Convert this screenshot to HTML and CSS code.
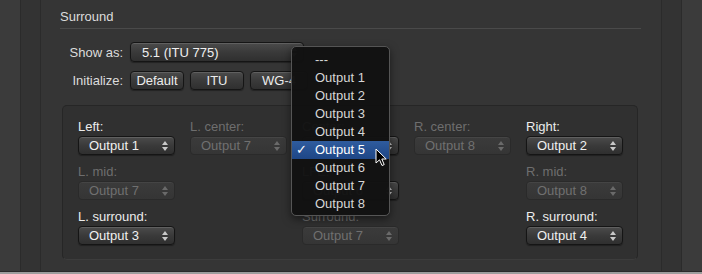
FILE: index.html
```html
<!DOCTYPE html>
<html>
<head>
  <title>Surround Preferences</title>
  <link rel="stylesheet" href="styles.css">
</head>
<body>
  <div class="window">
    <div class="frame">
      <div class="band band-outer"></div>
      <div class="band band-inner"></div>

      <div class="pane">
        <div class="section-title">Surround</div>

        <div class="form-row">
          <span class="form-label">Show as:</span>
          <div class="popup popup-wide">
            <span class="popup-value">5.1 (ITU 775)</span>
            <svg class="arrows" width="6" height="10" viewBox="0 0 6 10"><path d="M0 4 L3 0 L6 4 Z M0 6 L3 10 L6 6 Z"/></svg>
          </div>
        </div>

        <div class="form-row row-buttons">
          <span class="form-label">Initialize:</span>
          <button class="push">Default</button>
          <button class="push">ITU</button>
          <button class="push push-wide">WG-4</button>
        </div>

        <!-- speaker assignment -->
        <div class="group">
          <div class="speaker-grid">
            <div class="cell">
              <div class="cell-label">Left:</div>
              <div class="popup"><span class="popup-value">Output 1</span><svg class="arrows" width="6" height="10" viewBox="0 0 6 10"><path d="M0 4 L3 0 L6 4 Z M0 6 L3 10 L6 6 Z"/></svg></div>
            </div>
            <div class="cell off">
              <div class="cell-label">L. center:</div>
              <div class="popup"><span class="popup-value">Output 7</span><svg class="arrows" width="6" height="10" viewBox="0 0 6 10"><path d="M0 4 L3 0 L6 4 Z M0 6 L3 10 L6 6 Z"/></svg></div>
            </div>
            <div class="cell">
              <div class="cell-label">Center:</div>
              <div class="popup"><span class="popup-value">Output 5</span><svg class="arrows" width="6" height="10" viewBox="0 0 6 10"><path d="M0 4 L3 0 L6 4 Z M0 6 L3 10 L6 6 Z"/></svg></div>
            </div>
            <div class="cell off">
              <div class="cell-label">R. center:</div>
              <div class="popup"><span class="popup-value">Output 8</span><svg class="arrows" width="6" height="10" viewBox="0 0 6 10"><path d="M0 4 L3 0 L6 4 Z M0 6 L3 10 L6 6 Z"/></svg></div>
            </div>
            <div class="cell">
              <div class="cell-label">Right:</div>
              <div class="popup"><span class="popup-value">Output 2</span><svg class="arrows" width="6" height="10" viewBox="0 0 6 10"><path d="M0 4 L3 0 L6 4 Z M0 6 L3 10 L6 6 Z"/></svg></div>
            </div>

            <div class="cell off col-1">
              <div class="cell-label">L. mid:</div>
              <div class="popup"><span class="popup-value">Output 7</span><svg class="arrows" width="6" height="10" viewBox="0 0 6 10"><path d="M0 4 L3 0 L6 4 Z M0 6 L3 10 L6 6 Z"/></svg></div>
            </div>
            <div class="cell col-3">
              <div class="cell-label">LFE:</div>
              <div class="popup"><span class="popup-value">Output 6</span><svg class="arrows" width="6" height="10" viewBox="0 0 6 10"><path d="M0 4 L3 0 L6 4 Z M0 6 L3 10 L6 6 Z"/></svg></div>
            </div>
            <div class="cell off col-5">
              <div class="cell-label">R. mid:</div>
              <div class="popup"><span class="popup-value">Output 8</span><svg class="arrows" width="6" height="10" viewBox="0 0 6 10"><path d="M0 4 L3 0 L6 4 Z M0 6 L3 10 L6 6 Z"/></svg></div>
            </div>

            <div class="cell col-1">
              <div class="cell-label">L. surround:</div>
              <div class="popup"><span class="popup-value">Output 3</span><svg class="arrows" width="6" height="10" viewBox="0 0 6 10"><path d="M0 4 L3 0 L6 4 Z M0 6 L3 10 L6 6 Z"/></svg></div>
            </div>
            <div class="cell off col-3">
              <div class="cell-label">Surround:</div>
              <div class="popup"><span class="popup-value">Output 7</span><svg class="arrows" width="6" height="10" viewBox="0 0 6 10"><path d="M0 4 L3 0 L6 4 Z M0 6 L3 10 L6 6 Z"/></svg></div>
            </div>
            <div class="cell col-5">
              <div class="cell-label">R. surround:</div>
              <div class="popup"><span class="popup-value">Output 4</span><svg class="arrows" width="6" height="10" viewBox="0 0 6 10"><path d="M0 4 L3 0 L6 4 Z M0 6 L3 10 L6 6 Z"/></svg></div>
            </div>
          </div>
        </div>
      </div>

      <div class="band band-inner"></div>
      <div class="band band-outer"></div>
    </div>
    <div class="bottom-strip"></div>
  </div>

  <!-- open popup menu -->
  <ul class="menu">
    <li>---</li>
    <li>Output 1</li>
    <li>Output 2</li>
    <li>Output 3</li>
    <li>Output 4</li>
    <li class="selected"><span class="check">✓</span>Output 5</li>
    <li>Output 6</li>
    <li>Output 7</li>
    <li>Output 8</li>
  </ul>

  <svg class="cursor" width="13" height="19" viewBox="0 0 13 19">
    <path d="M1 1 L1 15 L4.5 11.8 L7 17.5 L9.2 16.6 L6.8 11 L11.2 11 Z" fill="#000" stroke="#fff" stroke-width="1" stroke-linejoin="round"/>
  </svg>
</body>
</html>
```

FILE: styles.css
```css
html, body {
  margin: 0;
  padding: 0;
  width: 702px;
  height: 274px;
  overflow: hidden;
  background-color: #353535;
  font-family: "Liberation Sans", Arial, sans-serif;
  font-size: 13px;
  color: #e6e6e6;
}
.window {
  display: flex;
  flex-direction: column;
  height: 274px;
}
.frame {
  display: flex;
  height: 271px;
}
.bottom-strip {
  height: 3px;
  background-color: #9d9d9d;
  border-top: 1px solid #2a2a2a;
  box-sizing: border-box;
}
.band-outer {
  width: 20px;
  background-color: #3b3b3b;
}
.band-inner {
  width: 19px;
  background-color: #333333;
  border-left: 1px solid #2b2b2b;
  border-right: 1px solid #2b2b2b;
}
.pane {
  width: 620px;
  background-color: #353535;
  padding: 9px 20px 0 19px;
  box-sizing: border-box;
}
.section-title {
  line-height: 16px;
  padding-bottom: 3px;
  border-bottom: 1px solid #4a4a4a;
  color: #dcdcdc;
}
.form-row {
  display: flex;
  align-items: center;
  margin-top: 13px;
}
.row-buttons {
  margin-top: 9px;
}
.form-label {
  width: 63px;
  margin-right: 7px;
  text-align: right;
  color: #dcdcdc;
}
.popup {
  position: relative;
  display: flex;
  align-items: center;
  justify-content: space-between;
  height: 19px;
  padding: 0 6px 0 10px;
  box-sizing: border-box;
  border: 1px solid #151515;
  border-radius: 4px;
  background: linear-gradient(#4b4b4b, #3a3a3a 50%, #2f2f2f);
  box-shadow: inset 0 1px 0 rgba(255, 255, 255, 0.12), 0 1px 1px rgba(0, 0, 0, 0.35);
  color: #f0f0f0;
}
.popup-wide {
  width: 174px;
  height: 20px;
  padding-left: 11px;
}
.arrows {
  fill: #c8c8c8;
}
.push {
  width: 54px;
  height: 19px;
  margin: 0 6px 0 0;
  padding: 0;
  border: 1px solid #151515;
  border-radius: 4px;
  background: linear-gradient(#4b4b4b, #3a3a3a 50%, #2f2f2f);
  box-shadow: inset 0 1px 0 rgba(255, 255, 255, 0.12), 0 1px 1px rgba(0, 0, 0, 0.35);
  color: #ececec;
  font-family: "Liberation Sans", Arial, sans-serif;
  font-size: 13px;
  line-height: 17px;
}
.push-wide {
  width: 58px;
}
.group {
  margin: 15px 3px 0 2px;
  padding: 13px 15px 14px 15px;
  border: 1px solid #262626;
  border-bottom-color: #3c3c3c;
  border-radius: 5px;
  background-color: #303030;
}
.speaker-grid {
  display: grid;
  grid-template-columns: repeat(5, 98px);
  column-gap: 14px;
  row-gap: 9px;
}
.col-1 { grid-column: 1; }
.col-3 { grid-column: 3; }
.col-5 { grid-column: 5; }
.cell-label {
  line-height: 15px;
  margin-bottom: 2px;
  color: #ececec;
}
.cell .popup {
  width: 97px;
}
.cell.off .cell-label {
  color: #6e6e6e;
}
.cell.off .popup {
  background: linear-gradient(#3b3b3b, #353535);
  border-color: #2a2a2a;
  box-shadow: inset 0 1px 0 rgba(255, 255, 255, 0.05);
  color: #707070;
}
.cell.off .arrows {
  fill: #6a6a6a;
}
.menu {
  position: absolute;
  left: 291px;
  top: 46px;
  width: 99px;
  height: 170px;
  margin: 0;
  padding: 4px 0;
  box-sizing: border-box;
  list-style: none;
  background-color: rgba(17, 17, 17, 0.98);
  border: 1px solid #555555;
  border-radius: 5px;
  box-shadow: 0 3px 8px rgba(0, 0, 0, 0.5);
}
.menu li {
  position: relative;
  height: 18px;
  line-height: 18px;
  padding-left: 23px;
  color: #d6d6d6;
}
.menu li.selected {
  background: linear-gradient(#2f5c9e, #1e4686);
  color: #ffffff;
}
.check {
  position: absolute;
  left: 4px;
  top: 0;
  font-family: "DejaVu Sans", sans-serif;
  font-size: 13px;
  color: #ffffff;
}
.cursor {
  position: absolute;
  left: 375px;
  top: 148px;
}
```
